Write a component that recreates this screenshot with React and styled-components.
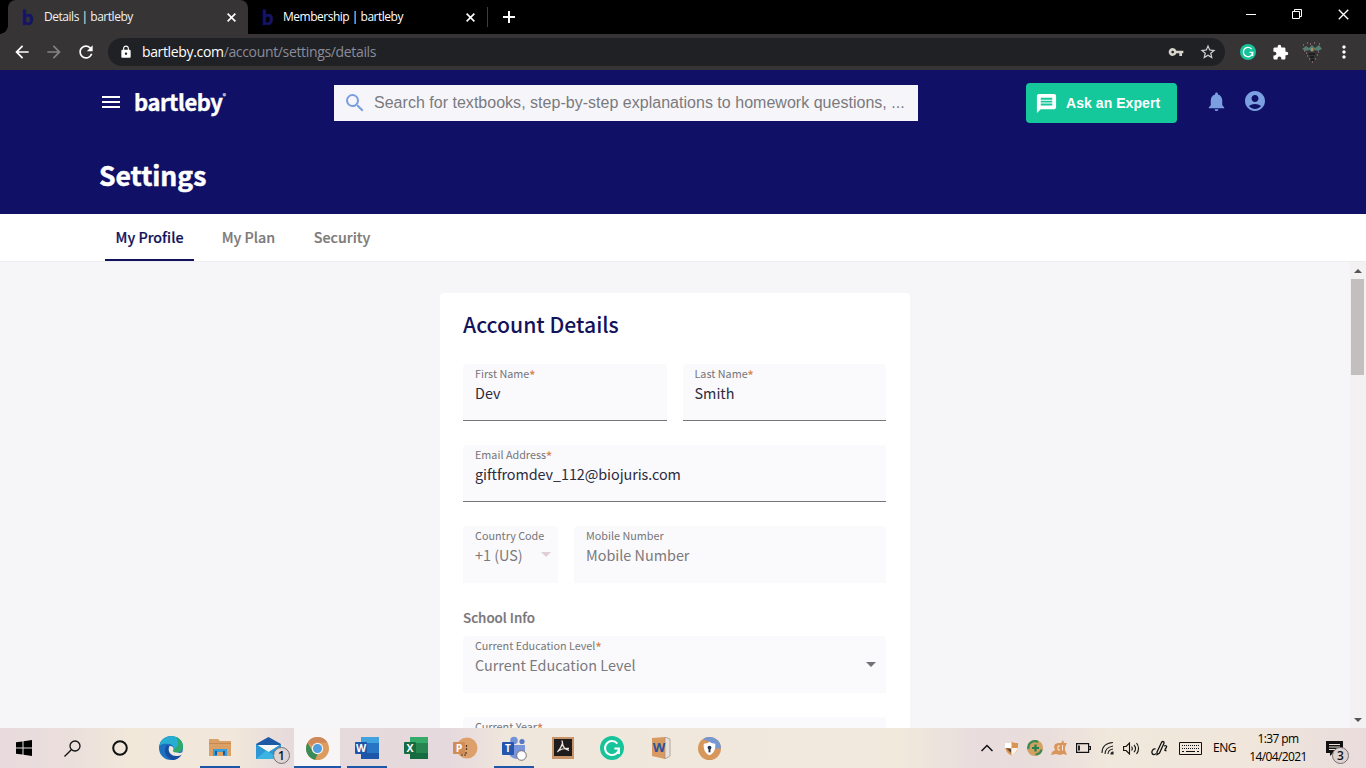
import React from 'react';
import styled, { createGlobalStyle } from 'styled-components';
import {
  MdAccountCircle,
  MdArrowBack,
  MdArrowForward,
  MdExtension,
  MdLock,
  MdMessage,
  MdMoreVert,
  MdNotifications,
  MdRefresh,
  MdSearch,
  MdStarBorder,
  MdVpnKey,
} from 'react-icons/md';

const GlobalStyle = createGlobalStyle`
  * {
    box-sizing: border-box;
  }

  body {
    margin: 0;
    overflow: hidden;
  }

  svg {
    display: block;
    flex: none;
  }
`;

const source = "'Noto Sans CJK SC', 'Noto Sans', sans-serif";
const segoe = "'Open Sans', 'Noto Sans', sans-serif";

const Screen = styled.div`
  width: 1366px;
  height: 768px;
  display: flex;
  flex-direction: column;
  overflow: hidden;
  background-color: #f6f6f8;
  font-family: ${source};
`;

/* Browser */

const TabStrip = styled.div`
  height: 34px;
  flex: none;
  display: flex;
  align-items: stretch;
  padding-left: 8px;
  background-color: #000;
`;

const Tab = styled.div`
  position: relative;
  width: ${(props) => (props.$active ? 240 : 239)}px;
  display: flex;
  align-items: center;
  padding: 0 12px;
  border-radius: 8px 8px 0 0;
  color: ${(props) => (props.$active ? '#f1f1f1' : '#fff')};
  background-color: ${(props) => (props.$active ? '#373435' : '#000')};

  &::before,
  &::after {
    content: '';
    display: ${(props) => (props.$active ? 'block' : 'none')};
    position: absolute;
    bottom: 0;
    width: 8px;
    height: 8px;
  }

  &::before {
    left: -8px;
    background: radial-gradient(circle at 0 0, #000 7.5px, #373435 8px);
  }

  &::after {
    right: -8px;
    background: radial-gradient(circle at 100% 0, #000 7.5px, #373435 8px);
  }
`;

const Favicon = styled.span`
  width: 15px;
  margin-right: 9px;
  padding-bottom: 1px;
  text-align: center;
  color: #151467;
  font: 700 19px/20px ${source};
  -webkit-text-stroke: 0.4px #151467;
`;

const TabTitle = styled.span`
  flex: 1;
  margin-left: ${(props) => props.$offset || 0}px;
  font: 400 12px/16px ${segoe};
  letter-spacing: ${(props) => props.$spacing || 0}px;
  white-space: nowrap;
`;

const TabDivider = styled.div`
  width: 1px;
  height: 20px;
  margin: 7px 15px 0 0;
  background-color: #3d3d3d;
`;

const NewTab = styled.div`
  display: flex;
  align-items: center;
`;

const WindowControls = styled.div`
  display: flex;
  align-items: center;
  height: 28px;
  margin-left: auto;
`;

const WindowButton = styled.div`
  width: 46px;
  display: flex;
  justify-content: center;
`;

const Toolbar = styled.div`
  height: 36px;
  flex: none;
  display: flex;
  align-items: center;
  padding: 0 6px;
  background-color: #373435;
  color: #fff;
`;

const ToolButton = styled.div`
  width: 32px;
  display: flex;
  justify-content: center;
  color: ${(props) => (props.$muted ? '#858283' : '#fff')};
`;

const AddressBar = styled.div`
  height: 28px;
  width: 1118px;
  margin: 0 7px 0 6px;
  display: flex;
  align-items: center;
  padding: 0 1px 0 11px;
  border-radius: 14px;
  background-color: #202124;
`;

const Address = styled.div`
  flex: 1;
  margin-left: 9px;
  font: 400 14px/20px ${segoe};
  letter-spacing: -0.34px;
  color: #fff;

  span {
    color: #8b8c9b;
  }
`;

/* Site header */

const SiteHeader = styled.header`
  height: 144px;
  flex: none;
  padding: 0 99px;
  color: #fff;
  background-color: #101066;
`;

const HeaderRow = styled.div`
  height: 66px;
  display: flex;
  align-items: center;

  & > * {
    flex: none;
  }
`;

const MenuIcon = styled.div`
  width: 18px;
  height: 12px;
  margin: 0 14px 2px 3px;
  border-top: 2px solid #fff;
  border-bottom: 2px solid #fff;
  display: flex;
  flex-direction: column;
  justify-content: center;

  &::before {
    content: '';
    height: 2px;
    background-color: #fff;
  }
`;

const Logo = styled.div`
  width: 200px;
  display: flex;
  padding-bottom: 4px;
  font: 700 22px/30px ${source};
  letter-spacing: -0.45px;
  -webkit-text-stroke: 0.4px #fff;

  sup {
    font-size: 7px;
    line-height: 20px;
    -webkit-text-stroke: 0;
  }
`;

const SearchBox = styled.div`
  width: 584px;
  height: 36px;
  display: flex;
  align-items: center;
  padding-left: 9px;
  background-color: #f6f6fa;
  color: #7a7a7e;
  font: 400 16px/20px 'Liberation Sans', Arial, sans-serif;
  letter-spacing: 0.02px;

  svg {
    margin-right: 7px;
    color: #7a9ede;
  }
`;

const AskButton = styled.div`
  width: 151px;
  height: 40px;
  margin: 0 28px 0 108px;
  display: flex;
  align-items: center;
  gap: 8px;
  padding-left: 9px;
  border-radius: 4px;
  background-color: #14c89b;
  font: 700 14px/20px 'Liberation Sans', Arial, sans-serif;
  letter-spacing: 0.06px;
  white-space: nowrap;
`;

const HeaderIcons = styled.div`
  display: flex;
  align-items: center;
  gap: 15px;
  padding-bottom: 4px;
  color: #7b9fe0;
`;

const PageTitle = styled.h1`
  margin: 19px 0 0;
  font: 700 26.5px/40px ${source};
  -webkit-text-stroke: 0.5px #fff;
`;

const SubNav = styled.nav`
  height: 48px;
  flex: none;
  display: flex;
  padding-left: 105px;
  background-color: #fff;
  border-bottom: 1px solid #ededf0;
`;

const SubNavItem = styled.div`
  height: 47px;
  width: ${(props) => props.$width}px;
  margin-right: ${(props) => props.$gap}px;
  text-align: center;
  border-bottom: 2px solid ${(props) => (props.$active ? '#13125c' : 'transparent')};
  color: ${(props) => (props.$active ? '#13125c' : '#7d7a7a')};
  font: 500 14.3px/45px ${source};
  -webkit-text-stroke: 0.2px currentColor;
  white-space: nowrap;
`;

/* Content */

const Content = styled.main`
  flex: 1;
  min-height: 0;
  display: flex;
`;

const Page = styled.div`
  flex: 1;
  display: flex;
  justify-content: center;
  align-items: flex-start;
  padding-top: 31px;
  overflow: hidden;
`;

const Card = styled.section`
  width: 470px;
  height: 600px;
  flex: none;
  padding: 15px 24px 0 23px;
  border-radius: 4px;
  background-color: #fff;
`;

const CardTitle = styled.h2`
  margin: 0 0 24px;
  color: #13125c;
  font: 500 21.2px/32px ${source};
`;

const FieldRow = styled.div`
  display: grid;
  grid-template-columns: ${(props) => props.$columns || '1fr'};
  gap: 16px;
  margin-bottom: 24px;
`;

const Field = styled.div`
  height: 57px;
  padding: 0 10px 0 12px;
  border-radius: 4px 4px 0 0;
  border-bottom: 1px solid ${(props) => (props.$filled ? '#77757c' : 'transparent')};
  background-color: #fafafc;
`;

const Label = styled.div`
  height: 19px;
  display: flex;
  color: #77757a;
  font: 400 10.8px/18px ${source};
  white-space: nowrap;

  span {
    padding-top: 2px;
    color: #d98852;
    font-size: 12px;
    font-weight: 700;
  }
`;

const Value = styled.div`
  height: 20px;
  display: flex;
  align-items: center;
  justify-content: space-between;
  color: ${(props) => (props.$filled ? '#2c2b3b' : '#7b797d')};
  font: 400 14.4px/20px ${source};
  letter-spacing: ${(props) => props.$spacing || 0}px;
  white-space: nowrap;
`;

const Caret = styled.i`
  border: 5px solid transparent;
  border-top-color: ${(props) => (props.$light ? '#dfcfd2' : '#737176')};
  border-bottom: 0;
  margin: 0 ${(props) => (props.$light ? -3 : 0)}px 2px 0;
`;

const GroupTitle = styled.h3`
  margin: 0 0 9px;
  color: #77757a;
  font: 500 13.4px/20px ${source};
  -webkit-text-stroke: 0.2px currentColor;
`;

const Scrollbar = styled.div`
  width: 16px;
  display: flex;
  flex-direction: column;
  align-items: center;
  padding: 7px 0 6px;
  background-color: #f3f1f1;
`;

const ScrollArrow = styled.i`
  border: 4px solid transparent;
  ${(props) => (props.$up ? 'border-bottom-color: #555; border-top: 0;' : 'border-top-color: #555; border-bottom: 0;')}
`;

const Thumb = styled.div`
  width: 13px;
  height: 96px;
  margin: 6px 1px auto 0;
  background-color: #c3bfbf;
`;

/* Taskbar */

const Taskbar = styled.footer`
  height: 40px;
  flex: none;
  display: flex;
  background: linear-gradient(
    90deg,
    #e8dadd 0,
    #ebdfdc 70px,
    #f1e8da 130px,
    #f1e7da 235px,
    #e7dadc 290px,
    #e6d9dd 450px,
    #f0e7dc 510px,
    #f1e9dc 900px,
    #e8dcdd 980px,
    #eadedc 1050px,
    #f1e8dc 1110px,
    #f0e6db 1250px,
    #e9dcdc 1366px
  );
`;

const TaskItem = styled.div`
  position: relative;
  width: ${(props) => (props.$system ? 48 : 49)}px;
  display: flex;
  align-items: center;
  justify-content: center;
  background-clip: content-box;
  padding: ${(props) => (props.$current ? '0 2px 0 1px' : '0')};
  background-color: ${(props) => (props.$current ? '#f8f5f6' : 'transparent')};

  &::after {
    content: '';
    display: ${(props) => (props.$open ? 'block' : 'none')};
    position: absolute;
    bottom: 0;
    left: ${(props) => (props.$current ? 1 : 5)}px;
    right: ${(props) => (props.$current ? 1 : 4)}px;
    height: 2px;
    background-color: #1f57a8;
  }
`;

const Pinned = styled.div`
  display: flex;
  margin-left: 2px;
`;

const Badge = styled.span`
  position: absolute;
  right: ${(props) => props.$right}px;
  bottom: 4px;
  width: 17px;
  height: 17px;
  border: 1px solid #77706f;
  border-radius: 50%;
  text-align: center;
  color: #111;
  background-color: #ddd3d2;
  font: 600 12px/15px ${segoe};
`;

const Tray = styled.div`
  display: flex;
  align-items: center;
  margin-left: auto;
`;

const TrayIcon = styled.div`
  position: relative;
  width: ${(props) => props.$width || 24}px;
  height: 40px;
  display: flex;
  align-items: center;
  justify-content: center;
`;

const Language = styled.div`
  width: 37px;
  text-align: center;
  font: 400 12px/16px ${segoe};
  letter-spacing: -0.4px;
`;

const Clock = styled.div`
  width: 70px;
  text-align: center;
  font: 400 12px/18px ${segoe};
  letter-spacing: -0.6px;
  white-space: nowrap;
`;

function CloseIcon({ size = 9, width = 1.8 }) {
  return (
    <svg width={size} height={size} viewBox='0 0 10 10' stroke='#fff' strokeWidth={width}>
      <path d='M.7.7l8.6 8.6M9.3.7L.7 9.3' />
    </svg>
  );
}

function GrammarlyIcon({ size }) {
  return (
    <svg width={size} height={size} viewBox='0 0 24 24' fill='none'>
      <circle cx='12' cy='12' r='12' fill='#17c39a' />
      <path d='M17.4 7.600A7 7 0 1 0 19 12.600h-4.600' stroke='#fff' strokeWidth='2' />
      <path d='M19 12v6' stroke='#fff' strokeWidth='1.800' />
    </svg>
  );
}

function OfficeIcon({ letter, dark, mid, light, round }) {
  return (
    <svg width='26' height='24' viewBox='0 0 26 24'>
      {round ? (
        <>
          <circle cx='15' cy='12' r='10.500' fill={light} />
          <path d='M9 19h5v-3M14.500 9v6' fill='none' stroke='#4a3226' strokeWidth='1.200' strokeDasharray='2 1' />
        </>
      ) : (
        <>
          <path d='M7 1h18v22H7z' fill={mid} />
          <path d='M7 1h18v6H7z' fill={light} />
          <path d='M7 17h18v6H7z' fill={dark} />
        </>
      )}
      <rect x='1' y='6' width='12' height='12' rx='1' fill={dark} />
      <text
        x='7'
        y='16'
        fill='#fff'
        textAnchor='middle'
        fontFamily='Open Sans, sans-serif'
        fontWeight='700'
        fontSize='10.500'
      >
        {letter}
      </text>
    </svg>
  );
}

const nameFields = [
  { label: 'First Name', value: 'Dev' },
  { label: 'Last Name', value: 'Smith' },
];

function Browser() {
  return (
    <>
      <TabStrip>
        <Tab $active>
          <Favicon>b</Favicon>
          <TabTitle $spacing={-0.47}>Details | bartleby</TabTitle>
          <CloseIcon />
        </Tab>
        <Tab>
          <Favicon>b</Favicon>
          <TabTitle $spacing={-0.49} $offset={-1}>
            Membership | bartleby
          </TabTitle>
          <CloseIcon />
        </Tab>
        <TabDivider />
        <NewTab>
          <svg width='12' height='12' viewBox='0 0 12 12' stroke='#fff' strokeWidth='2'>
            <path d='M6 0v12M0 6h12' />
          </svg>
        </NewTab>
        <WindowControls>
          <WindowButton>
            <svg width='10' height='10' viewBox='0 0 10 10'>
              <path d='M0 5h10v1H0z' fill='#fff' />
            </svg>
          </WindowButton>
          <WindowButton>
            <svg width='10' height='10' viewBox='0 0 10 10' fill='none' stroke='#fff'>
              <path d='M.5 2.500h7v7h-7zM2.500 2.500v-2h7v7h-2' />
            </svg>
          </WindowButton>
          <WindowButton>
            <CloseIcon size={11} width={1.2} />
          </WindowButton>
        </WindowControls>
      </TabStrip>
      <Toolbar>
        <ToolButton>
          <MdArrowBack size={20} />
        </ToolButton>
        <ToolButton $muted>
          <MdArrowForward size={20} />
        </ToolButton>
        <ToolButton>
          <MdRefresh size={20} />
        </ToolButton>
        <AddressBar>
          <MdLock size={14} />
          <Address>
            bartleby.com<span>/account/settings/details</span>
          </Address>
          <ToolButton>
            <MdVpnKey size={16} color='#d8d4cc' />
          </ToolButton>
          <ToolButton>
            <MdStarBorder size={18} color='#d5d3d3' />
          </ToolButton>
        </AddressBar>
        <ToolButton>
          <GrammarlyIcon size={16} />
        </ToolButton>
        <ToolButton>
          <MdExtension size={17} />
        </ToolButton>
        <ToolButton>
          <svg width='22' height='22' viewBox='0 0 22 22' fill='none'>
            <path d='M1 8l4-3 3 2 3-3 3 3 4-3 3 4-4 2-3-1-3 2-3-2-3 1z' fill='#547e70' />
            <path
              d='M2 4h1M6 2h1M9 3h1M13 2h1M18 3h1M3 10h1M5 12h1M17 11h1M6 15h1M16 14h1M8 18h1M14 18h1M11 21h1'
              stroke='#c98bab'
            />
            <path d='M8 13h6M9 16h4M10 19h3' stroke='#15191c' strokeWidth='1.500' />
            <path d='M11 7v3' stroke='#bc8757' strokeWidth='2' />
          </svg>
        </ToolButton>
        <ToolButton>
          <MdMoreVert size={20} />
        </ToolButton>
      </Toolbar>
    </>
  );
}

function FormField({ label, value, required, filled, caret, spacing }) {
  return (
    <Field $filled={filled}>
      <Label>
        {label}
        {required && <span>*</span>}
      </Label>
      <Value $filled={filled} $spacing={spacing}>
        {value}
        {caret && <Caret $light={caret === 'light'} />}
      </Value>
    </Field>
  );
}

function AccountDetails() {
  return (
    <Card>
      <CardTitle>Account Details</CardTitle>
      <FieldRow $columns='1fr 1fr'>
        {nameFields.map((field) => (
          <FormField key={field.label} {...field} required filled />
        ))}
      </FieldRow>
      <FieldRow>
        <FormField label='Email Address' value='giftfromdev_112@biojuris.com' spacing={-0.07} required filled />
      </FieldRow>
      <FieldRow $columns='95px 1fr'>
        <FormField label='Country Code' value='+1 (US)' caret='light' />
        <FormField label='Mobile Number' value='Mobile Number' />
      </FieldRow>
      <GroupTitle>School Info</GroupTitle>
      <FieldRow>
        <FormField label='Current Education Level' value='Current Education Level' required caret='dark' />
      </FieldRow>
      <FieldRow>
        <FormField label='Current Year' value='Current Year' required caret='dark' />
      </FieldRow>
    </Card>
  );
}

function WindowsTaskbar() {
  return (
    <Taskbar>
      <TaskItem $system>
        <svg width='16' height='16' viewBox='0 0 16 16'>
          <path d='M0 2.300L6.500 1.400V7.500H0zM7.500 1.200L16 0v7.500H7.500zM0 8.500h6.500v6.100L0 13.700zM7.500 8.500H16V16l-8.500-1.200z' />
        </svg>
      </TaskItem>
      <TaskItem $system>
        <svg width='17' height='17' viewBox='0 0 17 17' fill='none' stroke='#111' strokeWidth='1.300'>
          <circle cx='11' cy='6' r='5' />
          <path d='M7.300 9.700L.5 16.500' />
        </svg>
      </TaskItem>
      <TaskItem $system>
        <svg width='16' height='16' viewBox='0 0 16 16' fill='none' stroke='#111' strokeWidth='2'>
          <circle cx='8' cy='8' r='6.800' />
        </svg>
      </TaskItem>
      <Pinned>
        <TaskItem>
          <svg width='24' height='24' viewBox='0 0 24 24'>
            <circle cx='12' cy='12' r='12' fill='#1d6fc0' />
            <path d='M.3 10C2 3.500 7 0 12 0c7 0 12 5 12 10.500 0 4-3 6-6.500 6-2.500 0-4-1-3.500-2 1.500-2 1-6-4-6.500C6 7.600 2 8 .3 10z' fill='#27aed0' />
            <path d='M17 1c5 2 7 6 7 9.500 0 4-3 6-6.500 6-2.500 0-4-1-3.500-2 2-3 5-3 5-7 0-3-1-5-2-6.500z' fill='#31a86b' />
            <path d='M8 9c-4 5-2 12 5 15 4 .3 8-2 9.800-5.500-4 2.500-9 2-11.600-.8-2-2.400-2.200-5-.7-7.700z' fill='#174da0' />
            <path d='M10.500 10c-1.300 2.500-1 5.500.7 7.500 2.800 3 8 3.300 11.600 1L24 16c-2 1-4 1.200-6.500.5-2.500 0-4-1-3.500-2 1.200-1.700.5-5-3.500-4.500z' fill='#f1e8da' />
          </svg>
        </TaskItem>
        <TaskItem $open>
          <svg width='22' height='20' viewBox='0 0 22 20'>
            <path d='M0 1h9l2 2h11v15H0z' fill='#dba066' />
            <path d='M0 5h22v1H0z' fill='#c98a52' />
            <path d='M4 11h14v7h-4v-4H8v4H4z' fill='#3a9fd8' />
            <path d='M6 13h2v4H6zM14 13h2v4h-2z' fill='#1d5a9c' />
          </svg>
        </TaskItem>
        <TaskItem>
          <svg width='25' height='22' viewBox='0 0 25 22'>
            <path d='M0 7l12.500-7L25 7v3H0z' fill='#1d59a5' />
            <path d='M2 8h21v6l-10.500 3L2 14z' fill='#f6f7f7' />
            <path d='M0 7l12.500 8L25 7v15H0z' fill='#2d96d4' />
            <path d='M0 22l10-8.500 2.500 1.500L25 22z' fill='#3db3e2' />
          </svg>
          <Badge $right={3}>1</Badge>
        </TaskItem>
        <TaskItem $open $current>
          <svg width='23' height='23' viewBox='0 0 24 24'>
            <circle cx='12' cy='12' r='12' fill='#dc9c5e' />
            <path d='M1.600 6l5.600 9.200A6 6 0 0 0 12 18l-2.500 5.700A12 12 0 0 1 1.600 6z' fill='#388c59' />
            <path d='M1.600 6A12 12 0 0 1 22.400 6H12a6 6 0 0 0-5 3z' fill='#cf885a' />
            <circle cx='12' cy='12' r='6' fill='#f5efed' />
            <circle cx='12' cy='12' r='4.700' fill='#4e9de0' />
          </svg>
        </TaskItem>
        <TaskItem $open>
          <OfficeIcon letter='W' dark='#1d56a8' mid='#2875c6' light='#42a2de' />
        </TaskItem>
        <TaskItem>
          <OfficeIcon letter='X' dark='#176b40' mid='#27864f' light='#35aa69' />
        </TaskItem>
        <TaskItem>
          <OfficeIcon letter='P' dark='#d28c58' mid='#d89660' light='#dca16b' round />
        </TaskItem>
        <TaskItem $open>
          <svg width='26' height='25' viewBox='0 0 26 25'>
            <circle cx='13' cy='4.500' r='3.800' fill='#7693d7' />
            <circle cx='21' cy='5.500' r='2.600' fill='#5578c7' />
            <path d='M8 9h16v7c0 5-3 7-7 7-6 0-9-3-9-7z' fill='#7895dc' />
            <rect x='1' y='6' width='12' height='13' rx='1' fill='#2458ae' />
            <text x='7' y='16' textAnchor='middle' fill='#fff' fontFamily='Open Sans, sans-serif' fontWeight='700' fontSize='10'>
              T
            </text>
            <circle cx='20.500' cy='19.500' r='4.800' fill='#fff' stroke='#77706f' />
          </svg>
        </TaskItem>
        <TaskItem>
          <svg width='22' height='22' viewBox='0 0 22 22'>
            <path d='M0 0h22v22H0z' fill='#c7946a' />
            <path d='M2 2h18v17H2z' fill='#1d1b1c' />
            <path
              d='M9.500 4c2 0 1 5-4 11M10.500 6c0 3 2 6 6.500 7.500M6 14c3-2 6-3 11-2.500'
              fill='none'
              stroke='#eee6e0'
              strokeWidth='1.300'
            />
          </svg>
        </TaskItem>
        <TaskItem>
          <GrammarlyIcon size={24} />
        </TaskItem>
        <TaskItem>
          <svg width='20' height='22' viewBox='0 0 20 22'>
            <path d='M1 1l13-1v22L1 19z' fill='#d99a62' />
            <path d='M14 0l5 2v17l-5 3z' fill='#e8e0da' stroke='#9c8f86' strokeWidth='.7' />
            <text x='8' y='15' textAnchor='middle' fill='#27539b' fontFamily='Open Sans, sans-serif' fontWeight='700' fontSize='13'>
              W
            </text>
          </svg>
        </TaskItem>
        <TaskItem>
          <svg width='23' height='23' viewBox='0 0 24 24'>
            <circle cx='12' cy='12' r='12' fill='#d8975a' />
            <path d='M5 2.300A12 12 0 0 1 24 12h-5L12 5z' fill='#7697d2' />
            <path d='M12 5c2 1.500 4 2 6 2 .5 6-1.500 10-6 12-4.500-2-6.500-6-6-12 2 0 4-.5 6-2z' fill='#fff' />
            <circle cx='12' cy='11' r='2' fill='#26364f' />
            <path d='M11 11h2v5h-2z' fill='#26364f' />
          </svg>
        </TaskItem>
      </Pinned>
      <Tray>
        <TrayIcon>
          <svg width='12' height='8' viewBox='0 0 12 8' fill='none' stroke='#111' strokeWidth='1.500'>
            <path d='M.5 7L6 1.500 11.500 7' />
          </svg>
        </TrayIcon>
        <TrayIcon>
          <svg width='15' height='15' viewBox='0 0 15 15'>
            <path d='M1 2c3 0 5-.5 6.500-1.500C9 1.500 11 2 14 2c.5 7-2 10-6.500 12.500C3 12 .5 9 1 2z' fill='#d99556' />
            <path d='M1 2c3 0 5-.5 6.500-1.500V7H1z' fill='#fff' />
            <path d='M7.500 7h6.200c-.8 3.500-2.700 5.500-6.200 7.500z' fill='#fbf3e8' />
            <path d='M2 7l5 1v4z' fill='#5c4b3e' />
          </svg>
        </TrayIcon>
        <TrayIcon>
          <svg width='16' height='16' viewBox='0 0 16 16'>
            <circle cx='8' cy='8' r='8' fill='#d2a05f' />
            <path
              d='M1.500 9A6.500 6.500 0 0 1 11 2M14.500 9.500a6.500 6.500 0 0 1-6 5'
              fill='none'
              stroke='#388a57'
              strokeWidth='2.200'
            />
            <path d='M8.500 4.500v7M5 8h7' stroke='#24804f' strokeWidth='2.200' />
          </svg>
        </TrayIcon>
        <TrayIcon>
          <svg width='16' height='16' viewBox='0 0 16 16'>
            <path d='M4 4l3-1 3 0 2-3 1 3 3 0-2 4 0 3 2 5-4-1-3 1-4-1-5 1 1-3 3-2-1-3z' fill='#d9955a' />
            <path d='M9 6H7v4h2M11.500 5v5.500' stroke='#f8eadc' fill='none' />
          </svg>
        </TrayIcon>
        <TrayIcon>
          <svg width='15' height='10' viewBox='0 0 15 10' fill='none' stroke='#111' strokeWidth='1.200'>
            <path d='M.6.6h12v8.800H.6zM12.600 3.500h1.800v3h-1.800' />
            <path d='M3 2.500v5' strokeWidth='1.800' />
          </svg>
        </TrayIcon>
        <TrayIcon>
          <svg width='13' height='14' viewBox='0 0 13 14' fill='none' stroke='#222' strokeWidth='1.100'>
            <path d='M1 12C1 6 5 2 12 1.500M4 13c0-4 3-7 8-8M7 13c0-2.500 2-4.500 5-5' />
            <path d='M10 13c0-1 1-2 2-2v2z' fill='#222' />
          </svg>
        </TrayIcon>
        <TrayIcon>
          <svg width='17' height='13' viewBox='0 0 17 13' fill='none' stroke='#111' strokeWidth='1.100'>
            <path d='M.6 4.500h2.500L6.500 1v11L3.100 8.500H.6zM8.500 4.500c1 1.200 1 2.800 0 4M11 2.800c1.800 2.200 1.800 5.200 0 7.400M13.500 1c2.700 3.200 2.700 7.800 0 11' />
          </svg>
        </TrayIcon>
        <TrayIcon $width={32}>
          <svg width='17' height='16' viewBox='0 0 17 16' fill='none' stroke='#111' strokeWidth='1.300'>
            <path d='M6 12l4.500-9.500c1-1.800 3.200-.8 2.400 1L8.500 13 6 14.500z' />
            <path d='M4.500 9C2 8.500.5 11 1 13s3 2 4 .5M13 6c2-1 3.500 0 2 2s-1.500 3 .5 2.500' />
          </svg>
        </TrayIcon>
        <TrayIcon $width={31}>
          <svg width='23' height='13' viewBox='0 0 23 13' fill='none' stroke='#111'>
            <path d='M.5.500h22v12H.5z' />
            <path d='M3 3.500h17M3 6.500h17' strokeDasharray='1 1' />
            <path d='M3 9.500h2M7 9.500h9M18 9.500h2' />
          </svg>
        </TrayIcon>
        <Language>ENG</Language>
        <Clock>
          1:37 pm
          <br />
          14/04/2021
        </Clock>
        <TrayIcon $width={42}>
          <svg width='17' height='15' viewBox='0 0 17 15'>
            <path d='M0 0h17v12H7l-3 3v-3H0z' fill='#111' />
            <path d='M3 3.500h11M3 6h11M3 8.500h7' stroke='#efe5db' />
          </svg>
          <Badge $right={6}>3</Badge>
        </TrayIcon>
        <TrayIcon $width={11} />
      </Tray>
    </Taskbar>
  );
}

function App() {
  return (
    <Screen>
      <GlobalStyle />
      <Browser />
      <SiteHeader>
        <HeaderRow>
          <MenuIcon />
          <Logo>
            bartleby<sup>®</sup>
          </Logo>
          <SearchBox>
            <MdSearch size={24} />
            Search for textbooks, step-by-step explanations to homework questions, ...
          </SearchBox>
          <AskButton>
            <MdMessage size={23} />
            Ask an Expert
          </AskButton>
          <HeaderIcons>
            <MdNotifications size={23} />
            <MdAccountCircle size={24} />
          </HeaderIcons>
        </HeaderRow>
        <PageTitle>Settings</PageTitle>
      </SiteHeader>
      <SubNav>
        <SubNavItem $width={89} $gap={17} $active>
          My Profile
        </SubNavItem>
        <SubNavItem $width={75} $gap={17}>
          My Plan
        </SubNavItem>
        <SubNavItem $width={78} $gap={0}>
          Security
        </SubNavItem>
      </SubNav>
      <Content>
        <Page>
          <AccountDetails />
        </Page>
        <Scrollbar>
          <ScrollArrow $up />
          <Thumb />
          <ScrollArrow />
        </Scrollbar>
      </Content>
      <WindowsTaskbar />
    </Screen>
  );
}

export default App;
